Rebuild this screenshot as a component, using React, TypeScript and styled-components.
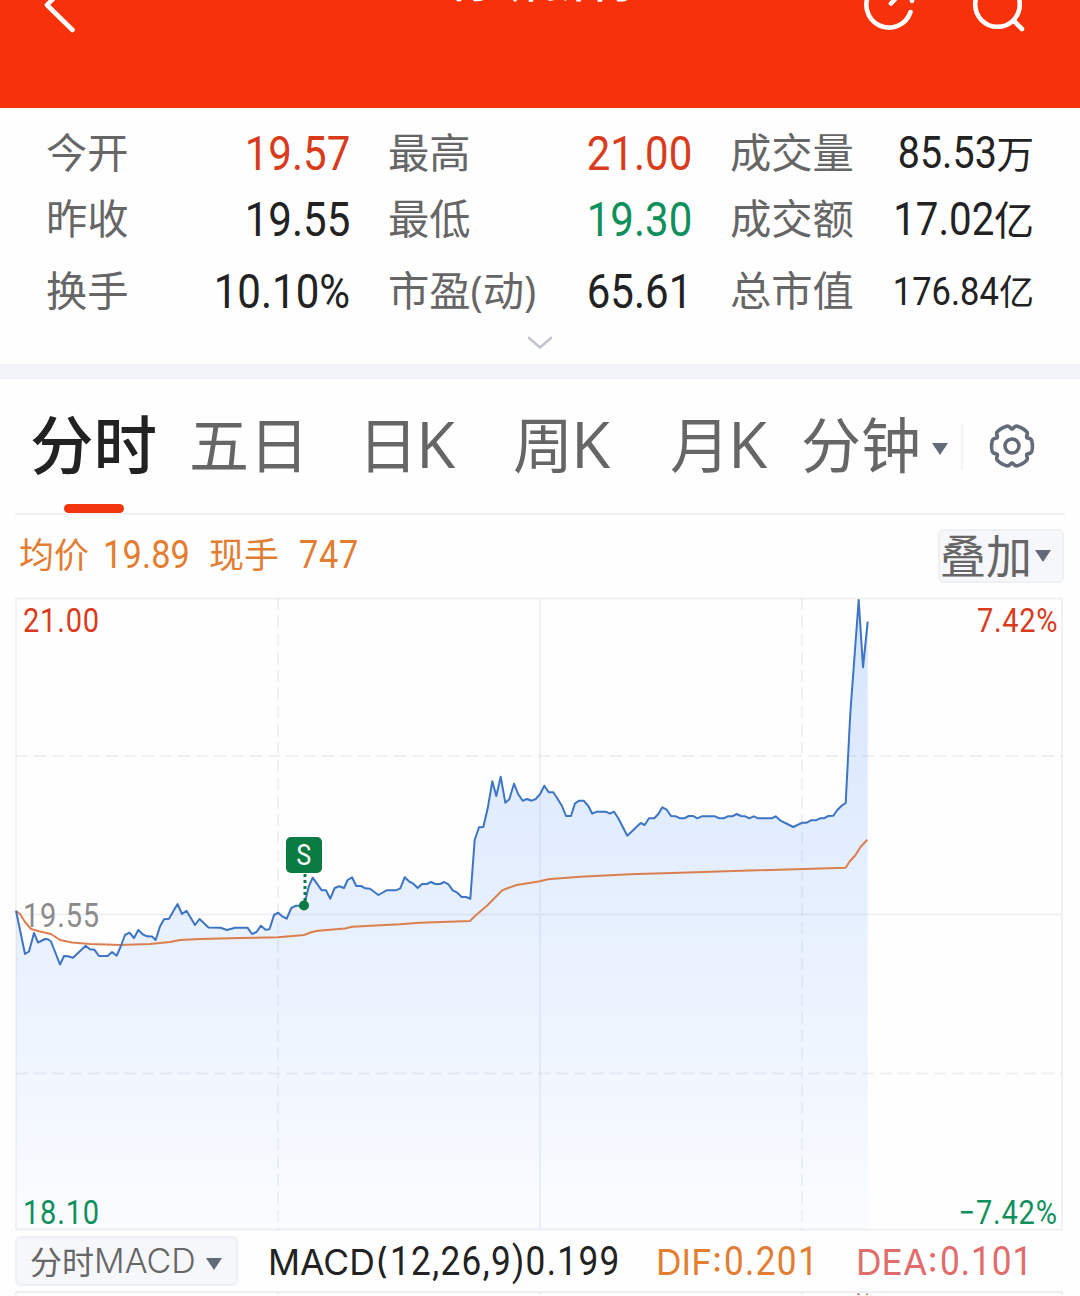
import React from "react";
import styled, { createGlobalStyle } from "styled-components";

const cjk = `"Noto Sans CJK SC", sans-serif`;
const red = "#d83c1c";
const green = "#0f8f5b";
const ink = "#222222";
const grey = "#666666";
const orange = "#e27d31";

const Global = createGlobalStyle`
  * { box-sizing: border-box; }
  body { margin: 0; background: #fff; }
`;

const Screen = styled.main`
  width: 1080px;
  height: 1296px;
  overflow: hidden;
  display: flex;
  flex-direction: column;
  background: #fefefe;
  font-family: ${cjk};
  white-space: nowrap;
`;

const Header = styled.header`
  flex: 0 0 108px;
  height: 108px;
  overflow: hidden;
  background: #f7320b;
  color: #fff;
  display: grid;
  grid-template-columns: 230px 1fr 230px;
`;

const HeaderTitle = styled.h1`
  margin: -53px 0 0;
  height: 60px;
  line-height: 60px;
  text-align: center;
  font-size: 47.5px;
  font-weight: 500;
`;

const HeaderIcon = styled.svg`
  display: block;
  fill: none;
  stroke: #fff;
  stroke-width: 4.6;
  stroke-linecap: round;
  stroke-linejoin: round;
`;

const Quote = styled.section`
  flex: 0 0 256px;
  height: 256px;
  display: flex;
  flex-direction: column;
  padding: 12px 46px 0;
`;

const QuoteRow = styled.div<{ $h: number }>`
  height: ${(p) => p.$h}px;
  display: grid;
  grid-template-columns: 304px 304px 304px;
  column-gap: 38px;
  align-items: center;
`;

const QuoteCell = styled.div`
  display: flex;
  justify-content: space-between;
  align-items: center;
  height: 66px;
`;

const Label = styled.span`
  color: ${grey};
  font-family: "Open Sans", ${cjk};
  font-size: 41.3px;
  line-height: 60px;
  padding-bottom: 2px;
`;

const Value = styled.span`
  display: flex;
  justify-content: flex-end;
  align-items: baseline;
  width: 148px;
  padding-top: 2px;
`;

const Num = styled.span<{ $size: number; $color?: string; $sx?: number; $left?: boolean; $ls?: number }>`
  display: inline-block;
  font-family: Roboto, sans-serif;
  font-size: ${(p) => p.$size}px;
  line-height: 1.2;
  color: ${(p) => p.$color ?? ink};
  letter-spacing: ${(p) => p.$ls ?? 0}px;
  transform: scaleX(${(p) => p.$sx ?? 0.88});
  transform-origin: ${(p) => (p.$left ? "left" : "right")} center;
`;

const Unit = styled.span<{ $size: number }>`
  font-size: ${(p) => p.$size}px;
  line-height: 1;
  color: ${ink};
`;

const Expand = styled.div`
  display: flex;
  justify-content: center;
  padding-top: 6px;
`;

const Band = styled.div`
  flex: 0 0 15px;
  background: #f2f3f8;
`;

const Tabs = styled.nav`
  flex: 0 0 136px;
  height: 136px;
  margin: 0 15px;
  border-bottom: 2px solid #f1f2f4;
  display: flex;
  align-items: stretch;
`;

const Tab = styled.div<{ $w: number; $active?: boolean; $pad: number; $size?: number }>`
  flex: 0 0 ${(p) => p.$w}px;
  padding-left: ${(p) => p.$pad}px;
  display: flex;
  flex-direction: column;
  color: ${(p) => (p.$active ? ink : grey)};
  font-size: ${(p) => p.$size ?? 60}px;
  font-weight: ${(p) => (p.$active ? 500 : 400)};
`;

const TabText = styled.span`
  height: 125px;
  line-height: 125px;
  display: flex;
  align-items: center;
`;

const Latin = styled.span`
  font-family: "Open Sans", sans-serif;
  font-size: 64px;
  line-height: 125px;
  padding-top: 4px;
  margin-left: -2px;
`;

const Indicator = styled.i`
  width: 60px;
  height: 9px;
  margin: 0 0 0 34px;
  border-radius: 5px;
  background: #f0350f;
`;

const Caret = styled.i<{ $ml: number; $mt?: number }>`
  border: 8px solid transparent;
  border-top: 12px solid #636a78;
  border-bottom: 0;
  margin: ${(p) => p.$mt ?? 0}px 0 0 ${(p) => p.$ml}px;
`;

const TabDivider = styled.i`
  width: 2px;
  height: 46px;
  margin: 45px 26px 0 0;
  background: #f2f3f5;
`;

const Gear = styled.svg`
  margin-top: 44px;
  fill: none;
  stroke: #636a78;
  stroke-width: 3.6;
  stroke-linejoin: round;
`;

const Info = styled.div`
  flex: 0 0 82px;
  height: 82px;
  padding: 0 16px 0 19px;
  display: flex;
  align-items: flex-start;
  justify-content: space-between;
`;

const InfoText = styled.div`
  display: grid;
  grid-template-columns: 84px 106px 90px 70px;
  align-items: center;
  height: 80px;
  color: ${orange};
  font-size: 35px;
`;

const InfoLabel = styled.span`
  line-height: 50px;
  padding-bottom: 5px;
`;

const Pill = styled.button<{ $w: number; $h: number; $size: number; $pad: number }>`
  width: ${(p) => p.$w}px;
  height: ${(p) => p.$h}px;
  padding: 0 0 0 ${(p) => p.$pad}px;
  border: 2px solid #eff0f4;
  border-radius: 6px;
  background: #f6f7fa;
  display: flex;
  align-items: center;
  color: ${grey};
  font-family: ${cjk};
  font-size: ${(p) => p.$size}px;
  line-height: 1;
`;

const PillText = styled.span<{ $lift: number }>`
  padding-bottom: ${(p) => p.$lift}px;
`;

const OverlaySlot = styled.div`
  padding-top: 14px;
`;

const ChartBox = styled.section`
  flex: 0 0 635px;
  height: 635px;
  position: relative;
`;

const ChartSvg = styled.svg`
  display: block;
`;

const Axis = styled.div<{ $top: number; $right?: boolean }>`
  position: absolute;
  top: ${(p) => p.$top}px;
  ${(p) => (p.$right ? "right: 22px;" : "left: 22.5px;")}
`;

const Badge = styled.div`
  position: absolute;
  left: 286px;
  top: 240px;
  width: 36px;
  height: 36px;
  border-radius: 5px;
  background: #0a7b42;
  display: flex;
  align-items: center;
  justify-content: center;
`;

const BadgeText = styled.span`
  font-family: Roboto, sans-serif;
  font-size: 30px;
  line-height: 36px;
  color: #fff;
  transform: scaleX(0.82);
`;

const MacdBar = styled.div`
  flex: 0 0 56px;
  height: 56px;
  padding: 4px 15px 0;
  display: flex;
  align-items: flex-start;
`;

const PillLatin = styled.span<{ $size: number }>`
  font-family: Inter, sans-serif;
  font-weight: 300;
  font-size: ${(p) => p.$size}px;
`;

const Metric = styled.div<{ $w: number; $color: string; $ml?: number }>`
  flex: 0 0 ${(p) => p.$w}px;
  margin-left: ${(p) => p.$ml ?? 0}px;
  height: 50px;
  padding-top: 2px;
  display: flex;
  align-items: baseline;
  color: ${(p) => p.$color};
  font-family: Inter, sans-serif;
  font-size: 35.5px;
  line-height: 50px;
`;

const MetricName = styled.span<{ $w: number; $ls?: number }>`
  flex: 0 0 ${(p) => p.$w}px;
  letter-spacing: ${(p) => p.$ls ?? 0}px;
`;

const Footer = styled.div`
  flex: 0 0 7px;
  height: 7px;
`;

const price: number[][] = [
  [16, 910.7], [25, 954], [29, 951.5], [34, 933], [38, 942.5], [45, 939], [48, 939.3], [51, 941.5], [60, 964.5],
  [64, 956], [68, 956.3], [73, 957.7], [85.7, 945.7], [90, 949.3], [94.5, 949.8], [99, 956], [107.7, 956],
  [112, 952], [116.7, 955.7], [120.7, 946.5], [125, 935], [129.5, 932.7], [134, 938], [138.3, 930], [143, 934.5],
  [147, 936.3], [152, 936.5], [155.7, 940], [160, 926.5], [164, 919.3], [169, 918.7], [177.5, 904], [182, 914],
  [186.5, 910.7], [195, 925], [199.5, 919], [208.5, 927.5], [220.5, 927.7], [227, 930], [235, 927.7],
  [247.5, 927.7], [252, 934], [256.5, 932], [261, 925.7], [265.5, 929.7], [269.5, 929.3], [274, 915],
  [278.3, 912.7], [282.7, 916.7], [286.7, 918.7], [291.3, 908], [296, 905.7], [304, 905.7], [308.7, 886.7],
  [312.7, 877.7], [321.7, 890.3], [326, 890.3], [330.3, 898.7], [334.7, 888], [339.3, 886.3], [344, 888],
  [347.7, 880], [352, 877.3], [356.3, 886], [361, 886], [365.3, 888.3], [370, 888.7], [378.3, 895], [386.7, 890.3],
  [396, 890.3], [400.3, 888.3], [404.7, 877.3], [409, 881.3], [413.3, 883.7], [417.7, 888], [422, 884],
  [426.7, 884], [431, 882], [435.3, 884], [440, 884], [444.3, 882], [448.7, 884.7], [452.7, 890.3], [457.3, 892.7],
  [461.7, 897], [466, 897], [470.3, 898.7], [474.7, 840], [479, 827.3], [483.3, 827], [487.7, 808.3],
  [492.3, 781.3], [496.3, 796], [500.7, 776.7], [505.3, 802.7], [509.3, 799.3], [514, 783.7], [518.3, 794.3],
  [522.7, 800.7], [527, 799], [531.7, 800.7], [535.7, 799], [540, 794.3], [544.3, 785.7], [548.7, 792.3],
  [553.3, 792.3], [557.7, 799], [562, 806], [566, 816], [571, 816], [575, 803.3], [579.3, 800.7], [583.7, 800.7],
  [588.3, 806], [592.3, 813.7], [596.7, 811.7], [605.7, 811.7], [610, 813.7], [614, 811.7], [618.3, 818.3],
  [627.3, 835.7], [640.7, 823], [644.7, 825], [649, 818.3], [654.3, 818.3], [658.3, 814], [662.3, 807.3],
  [666.7, 809.7], [671, 816], [676, 816.3], [680, 818.3], [684.3, 818.3], [688.7, 816], [693.3, 816],
  [697.3, 818.3], [701.7, 816.3], [715, 816.3], [719.3, 818.3], [723.7, 818.3], [727.7, 816.3], [732.3, 816.3],
  [736.7, 814], [741, 816], [745.3, 816.3], [749.3, 818.3], [753.7, 816.3], [758.3, 818.3], [771.7, 818.3],
  [775.7, 816.3], [780, 820.3], [793.3, 827], [802.3, 822.7], [806.7, 822.7], [811, 820.3], [815.7, 820.3],
  [820, 818.3], [824, 818.3], [828.3, 816], [833.3, 815.7], [837.3, 810], [841.7, 805.7], [845.7, 803],
  [850.3, 713.3], [858.7, 600], [863, 667.3], [867.7, 621.7],
];

const average: number[][] = [
  [16, 911], [20, 914], [25, 922], [31, 929], [40, 931.5], [51, 934], [60, 940], [72, 942.5], [90, 944],
  [120, 945], [150, 944], [170, 942], [180, 940], [200, 939], [240, 938], [278, 937.3], [304, 935], [312, 932],
  [318, 930.7], [345, 928.5], [352, 926.7], [400, 924.3], [420, 922.7], [470, 921], [475, 916], [486.7, 906],
  [501.7, 890.7], [508, 888], [516.7, 885], [540, 881.3], [548, 879.3], [580, 876.7], [630, 874.3], [680, 872.7],
  [756.7, 870.3], [845.7, 867.7], [850, 861], [855, 855.7], [860.7, 846.7], [867.3, 839.7],
];

const CHART_TOP = 597;
const toPoints = (s: number[][]) => s.map(([x, y]) => `${x},${(y - CHART_TOP).toFixed(1)}`).join(" ");

const gearPath = (() => {
  const pts: string[] = [];
  const n = 144;
  for (let i = 0; i < n; i++) {
    const a = (i / n) * Math.PI * 2;
    const notch = Math.max(0, -Math.cos(6 * a));
    const r = 20.4 - 3.4 * Math.pow(notch, 3);
    pts.push(`${(23 + r * Math.cos(a)).toFixed(2)},${(23 + r * Math.sin(a)).toFixed(2)}`);
  }
  return `M${pts.join("L")}Z`;
})();

type Item = { label: string; value: string; unit?: string; color?: string; size?: number; unitSize?: number };

const rows: { h: number; items: Item[] }[] = [
  {
    h: 66,
    items: [
      { label: "今开", value: "19.57", color: red },
      { label: "最高", value: "21.00", color: red },
      { label: "成交量", value: "85.53", unit: "万", size: 44.5, unitSize: 37.5 },
    ],
  },
  {
    h: 66,
    items: [
      { label: "昨收", value: "19.55" },
      { label: "最低", value: "19.30", color: green },
      { label: "成交额", value: "17.02", unit: "亿", size: 45.5, unitSize: 40 },
    ],
  },
  {
    h: 78,
    items: [
      { label: "换手", value: "10.10%" },
      { label: "市盈(动)", value: "65.61" },
      { label: "总市值", value: "176.84", unit: "亿", size: 39, unitSize: 35 },
    ],
  },
];

export default function App() {
  return (
    <Screen>
      <Global />
      <Header>
        <HeaderIcon width="100" height="60">
          <path d="M72.5 -21 L47 5 L72.5 30" />
        </HeaderIcon>
        <HeaderTitle>有研新材</HeaderTitle>
        <HeaderIcon width="230" height="60" viewBox="850 0 230 60">
          <path d="M910.5 12 A22.6 22.6 0 1 1 905 -11 M912 1 V-12 M891 3.5 L898 -4" />
          <circle cx="997.5" cy="4.5" r="22.3" />
          <path d="M1014 21 L1022 29" />
        </HeaderIcon>
      </Header>

      <Quote>
        {rows.map((row, i) => (
          <QuoteRow key={i} $h={row.h}>
            {row.items.map((it) => (
              <QuoteCell key={it.label}>
                <Label>{it.label}</Label>
                <Value>
                  <Num $size={it.size ?? 47.5} $color={it.color} $sx={0.885}>{it.value}</Num>
                  {it.unit && <Unit $size={it.unitSize ?? 38}>{it.unit}</Unit>}
                </Value>
              </QuoteCell>
            ))}
          </QuoteRow>
        ))}
        <Expand>
          <svg width="26" height="14" fill="none" stroke="#c3c6cd" strokeWidth="2.6" strokeLinecap="round">
            <path d="M2 2 L13 11.5 L24 2" />
          </svg>
        </Expand>
      </Quote>

      <Band />

      <Tabs>
        <Tab $w={160} $pad={15} $active $size={63.5}>
          <TabText>分时</TabText>
          <Indicator />
        </Tab>
        <Tab $w={171} $pad={14}><TabText>五日</TabText></Tab>
        <Tab $w={154} $pad={12}><TabText>日<Latin>K</Latin></TabText></Tab>
        <Tab $w={158} $pad={13}><TabText>周<Latin>K</Latin></TabText></Tab>
        <Tab $w={143} $pad={12}><TabText>月<Latin>K</Latin></TabText></Tab>
        <Tab $w={160} $pad={0}><TabText>分钟<Caret $ml={11} $mt={14} /></TabText></Tab>
        <TabDivider />
        <Gear width="46" height="46">
          <path d={gearPath} />
          <circle cx="23" cy="23" r="7" />
        </Gear>
      </Tabs>

      <Info>
        <InfoText>
          <InfoLabel>均价</InfoLabel>
          <Num $size={39} $color={orange} $left $ls={0.2}>19.89</Num>
          <InfoLabel>现手</InfoLabel>
          <Num $size={39} $color={orange} $left $ls={0.8}>747</Num>
        </InfoText>
        <OverlaySlot>
          <Pill $w={126} $h={54} $size={46} $pad={0}>
            <PillText $lift={6}>叠加</PillText>
            <Caret $ml={3} />
          </Pill>
        </OverlaySlot>
      </Info>

      <ChartBox>
        <ChartSvg width="1080" height="635">
          <defs>
            <linearGradient id="fill" x1="0" y1="0" x2="0" y2="633" gradientUnits="userSpaceOnUse">
              <stop offset="0" stopColor="#d5e5fd" />
              <stop offset="0.5" stopColor="#e7f0fe" />
              <stop offset="1" stopColor="#fafcff" />
            </linearGradient>
          </defs>
          <polygon points={`16,633 ${toPoints(price)} 867.7,633`} fill="url(#fill)" />
          <g stroke="#5a6e8c" strokeOpacity="0.085" strokeWidth="2" fill="none">
            <path d="M16 1.5H1063 M16 317.5H1063 M16 632.5H1063 M16 1V633 M540 1V633 M1062 1V633" />
            <path strokeDasharray="12 6" d="M16 159H1063 M16 476.5H1063 M278 1V633 M802 1V633" />
          </g>
          <polyline points={toPoints(average)} fill="none" stroke="#db7f4e" strokeWidth="2" strokeLinejoin="round" />
          <polyline points={toPoints(price)} fill="none" stroke="#3e74c4" strokeWidth="2" strokeLinejoin="round" />
          <path d="M305 277V306" stroke="#0a7b42" strokeWidth="3" strokeDasharray="3 3" />
          <circle cx="304" cy="308.5" r="5" fill="#0a7b42" />
        </ChartSvg>
        <Axis $top={4}><Num $size={33} $color={red} $left $ls={0.9}>21.00</Num></Axis>
        <Axis $top={299}><Num $size={33} $color="#8b8b8b" $left $ls={0.9}>19.55</Num></Axis>
        <Axis $top={596}><Num $size={33} $color={green} $left $ls={0.9}>18.10</Num></Axis>
        <Axis $top={4} $right><Num $size={33} $color={red} $ls={0.7}>7.42%</Num></Axis>
        <Axis $top={596} $right><Num $size={33} $color={green} $ls={0.9}>−7.42%</Num></Axis>
        <Badge><BadgeText>S</BadgeText></Badge>
      </ChartBox>

      <MacdBar>
        <Pill $w={223} $h={50} $size={32} $pad={13}>
          <PillText $lift={3}>分时</PillText>
          <PillLatin $size={34}>MACD</PillLatin>
          <Caret $ml={10} $mt={6} />
        </Pill>
        <Metric $w={388} $color={ink} $ml={30}>
          <MetricName $w={122}>MACD(</MetricName>
          <Num $size={40} $left $ls={1.5}>12,26,9)0.199</Num>
        </Metric>
        <Metric $w={200} $color={orange}>
          <MetricName $w={68}>DIF:</MetricName>
          <Num $size={40} $color={orange} $left $ls={1.5}>0.201</Num>
        </Metric>
        <Metric $w={190} $color="#e06c6c">
          <MetricName $w={84}>DEA:</MetricName>
          <Num $size={40} $color="#e06c6c" $left $ls={1.1}>0.101</Num>
        </Metric>
      </MacdBar>

      <Footer>
        <ChartSvg width="1080" height="7" fill="none" strokeWidth="2">
          <path stroke="#eceff2" d="M16 4H1063 M16 4V7 M278 4V7 M540 4V7 M802 4V7 M1062 4V7" />
          <path stroke="#d83c1c" d="M858.5 5.5V7" />
          <path stroke={orange} d="M867 5.5V7" />
        </ChartSvg>
      </Footer>
    </Screen>
  );
}
